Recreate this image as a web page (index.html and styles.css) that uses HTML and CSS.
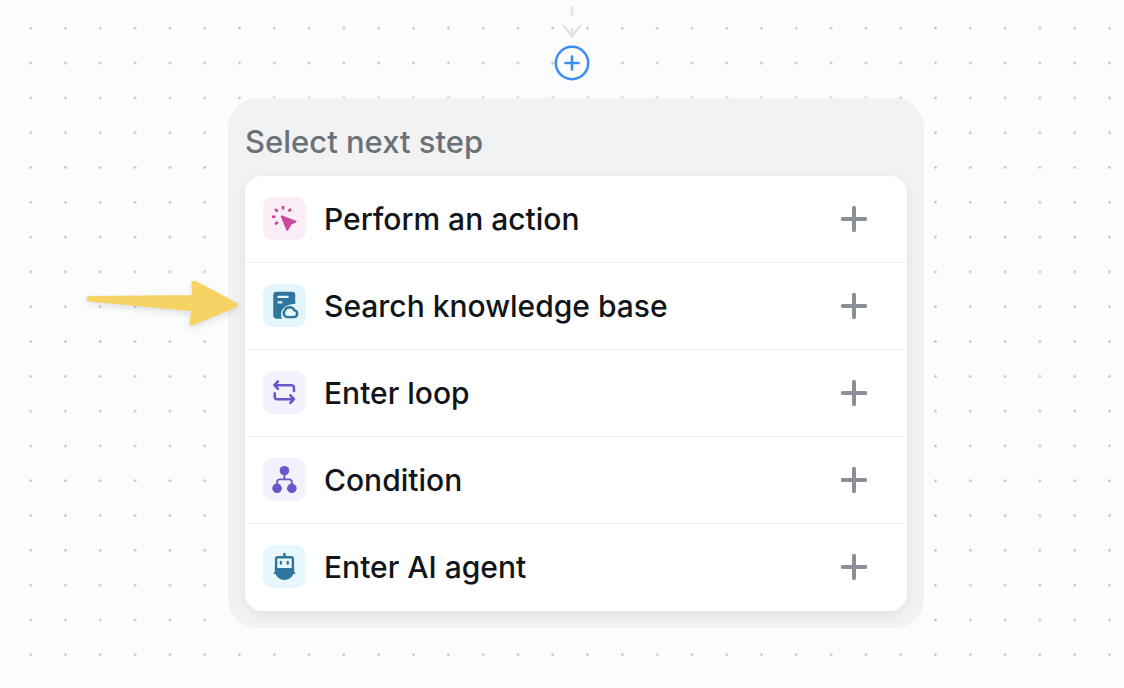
FILE: index.html
```html
<!DOCTYPE html>
<html lang="en">
<head>
<meta charset="utf-8">
<meta name="viewport" content="width=device-width, initial-scale=1">
<title>Select next step</title>
<link rel="stylesheet" href="styles.css">
</head>
<body>
<main class="canvas">
  <svg class="grid" aria-hidden="true">
    <defs>
      <pattern id="dots" x="13.3" y="10.9" width="34.8" height="34.8" patternUnits="userSpaceOnUse">
        <circle cx="17.4" cy="17.4" r="1.25" fill="#bcbec2"/>
      </pattern>
    </defs>
    <rect width="100%" height="100%" fill="url(#dots)"/>
  </svg>

  <div class="connector">
    <svg class="connector-line" viewBox="0 0 36 39" aria-hidden="true">
      <path d="M18 6V16.500M18 28V36M9 25L18 36L27 25" fill="none" stroke="#e3e4e6" stroke-width="2.600"/>
    </svg>
    <button class="add-node" type="button" aria-label="Add step">
      <svg viewBox="0 0 36 36" aria-hidden="true">
        <circle cx="18" cy="18" r="16.200" fill="#fff" stroke="#3b8cf5" stroke-width="2.500"/>
        <path d="M18 11.500V24.500M11.500 18H24.500" stroke="#3b8cf5" stroke-width="2.600" stroke-linecap="round"/>
      </svg>
    </button>
  </div>

  <section class="panel" aria-labelledby="panel-title">
    <h1 class="panel-title" id="panel-title">Select next step</h1>
    <ul class="steps">
      <li class="step">
        <button class="step-button" type="button">
          <svg class="step-icon pink" viewBox="0 0 44 44" aria-hidden="true">
            <path d="M18.300 20.200C18 19.300 18.800 18.600 19.600 18.900L33.700 24.300C34.700 24.700 34.700 25.700 33.700 26.100L29.100 28.100L25.700 33.900C25.200 34.700 24.100 34.600 23.800 33.700Z" fill="currentColor"/>
            <path d="M20.500 9.300V12.900M9.200 20.200H12.800M28.700 12.100L26.100 14.700M12.400 12.300L15 14.900M15.100 25.400L12.500 28" fill="none" stroke="currentColor" stroke-width="2.700"/>
          </svg>
          <span class="step-label">Perform an action</span>
          <svg class="plus" viewBox="0 0 28 28" aria-hidden="true"><path d="M14 2.700V25.300M2.700 14H25.300"/></svg>
        </button>
      </li>
      <li class="step">
        <svg class="pointer" viewBox="0 0 170 70" aria-hidden="true">
          <path d="M9 28.500L114.500 27.500L114 13L155.500 35L112 53L114 39L9 29Z" fill="#f7d366" stroke="#f7d366" stroke-width="5" stroke-linejoin="round"/>
        </svg>
        <button class="step-button" type="button">
          <svg class="step-icon teal" viewBox="0 0 44 44" aria-hidden="true">
            <path d="M14 8H29.500Q33 8 33 11.500V20.800C31.500 20.300 29.800 20.400 28.100 21C25.600 21.600 23.500 22.600 21.500 24.300C18.800 26.700 17.500 30.500 19.500 35.500H14Q10.500 35.500 10.500 32V11.500Q10.500 8 14 8Z" fill="currentColor"/>
            <path d="M15.800 13.300H25.200M15.800 18.800H19" stroke="#e3f6fc" stroke-width="2.300" stroke-linecap="round"/>
            <path d="M25.500 33.900H31.500A3.500 3.500 0 0 0 32.300 27A5.500 5.500 0 0 0 22.100 27.600A3.900 3.900 0 0 0 25.500 33.900Z" fill="#e3f6fc" stroke="currentColor" stroke-width="2.500"/>
          </svg>
          <span class="step-label">Search knowledge base</span>
          <svg class="plus" viewBox="0 0 28 28" aria-hidden="true"><path d="M14 2.700V25.300M2.700 14H25.300"/></svg>
        </button>
      </li>
      <li class="step">
        <button class="step-button" type="button">
          <svg class="step-icon violet" viewBox="0 0 44 44" aria-hidden="true">
            <path d="M15.300 10.700L11.700 14.500L15.300 18.300M12 14.500H29Q31.700 14.500 31.700 17.200V20.500M28 25L31.700 28.800L28 32.600M31.300 28.800H14.700Q12 28.800 12 26.100V22.800" fill="none" stroke="currentColor" stroke-width="2.600" stroke-linecap="round" stroke-linejoin="round"/>
          </svg>
          <span class="step-label">Enter loop</span>
          <svg class="plus" viewBox="0 0 28 28" aria-hidden="true"><path d="M14 2.700V25.300M2.700 14H25.300"/></svg>
        </button>
      </li>
      <li class="step">
        <button class="step-button" type="button">
          <svg class="step-icon violet" viewBox="0 0 44 44" aria-hidden="true">
            <g fill="currentColor"><circle cx="21.900" cy="13" r="4.900"/><circle cx="14.400" cy="31" r="4.900"/><circle cx="29.500" cy="31" r="4.900"/></g>
            <path d="M21.900 15V21.800M14.400 29V24.500Q14.400 21.800 17.100 21.800H26.800Q29.500 21.800 29.500 24.500V29" fill="none" stroke="currentColor" stroke-width="1.900"/>
          </svg>
          <span class="step-label">Condition</span>
          <svg class="plus" viewBox="0 0 28 28" aria-hidden="true"><path d="M14 2.700V25.300M2.700 14H25.300"/></svg>
        </button>
      </li>
      <li class="step">
        <button class="step-button" type="button">
          <svg class="step-icon aqua" viewBox="0 0 44 44" aria-hidden="true">
            <path d="M21.900 9.200V12" stroke="currentColor" stroke-width="2.600" stroke-linecap="round"/>
            <rect x="13.400" y="12.500" width="17.200" height="13" rx="1.800" fill="none" stroke="currentColor" stroke-width="2.500"/>
            <path d="M18.300 17.300V19M25.300 17.300V19" stroke="currentColor" stroke-width="2.400" stroke-linecap="round"/>
            <path d="M12.100 23.500H31.900V27L33.500 29.500L31 29.600C29.500 33.300 26.300 35.700 22 35.700C17.700 35.700 14.500 33.300 13 29.600L10.500 29.500L12.100 27Z" fill="currentColor"/>
          </svg>
          <span class="step-label">Enter AI agent</span>
          <svg class="plus" viewBox="0 0 28 28" aria-hidden="true"><path d="M14 2.700V25.300M2.700 14H25.300"/></svg>
        </button>
      </li>
    </ul>
  </section>
</main>
</body>
</html>
```
FILE: styles.css
```css
* {
  box-sizing: border-box;
}

body {
  margin: 0;
  background: #fbfcfe;
  color: #11151a;
  font-family: Inter, "Liberation Sans", sans-serif;
}

.canvas {
  position: relative;
  display: flex;
  flex-direction: column;
  min-height: 100vh;
  padding: 0 200px 60px 228px;
}

.grid {
  position: absolute;
  inset: 0;
  width: 100%;
  height: 100%;
}

.connector {
  position: relative;
  display: flex;
  flex-direction: column;
  align-items: center;
  margin: 0 9px 17px 0;
}

.connector-line {
  width: 36px;
  height: 39px;
}

.add-node {
  display: block;
  width: 36px;
  height: 36px;
  margin-top: 6px;
  padding: 0;
  border: 0;
  border-radius: 50%;
  background: none;
  cursor: pointer;
}

.add-node svg {
  display: block;
}

.panel {
  position: relative;
  padding: 24px 17px 17px;
  border-radius: 30px;
  background: #f1f2f4;
}

.panel-title {
  margin: 0 0 14px;
  color: #6c7177;
  font-size: 31px;
  font-weight: 450;
  line-height: 40px;
  font-optical-sizing: none;
}

.steps {
  margin: 0;
  padding: 0 0 1px;
  list-style: none;
  border-radius: 17px;
  background: #fff;
  box-shadow: 0 4px 14px rgba(20, 24, 32, 0.07);
}

.step {
  position: relative;
}

.step + .step {
  border-top: 1px solid #eeeef0;
}

.step-button {
  display: flex;
  align-items: center;
  gap: 18px;
  width: 100%;
  height: 86px;
  padding: 0 39px 1px 18px;
  border: 0;
  background: none;
  color: inherit;
  font: inherit;
  text-align: left;
  cursor: pointer;
}

.step-icon {
  flex: none;
  width: 43px;
  height: 43px;
  border-radius: 10px;
}

.pink {
  background: #faedf6;
  color: #c8489c;
}

.teal {
  background: #e3f6fc;
  color: #2f759e;
}

.violet {
  background: #f3f1fe;
  color: #6a56c9;
}

.aqua {
  background: #e7f7fe;
  color: #2f759e;
}

.step-label {
  flex: 1;
  font-size: 30px;
  font-weight: 500;
  line-height: 40px;
  font-optical-sizing: none;
}

.plus {
  flex: none;
  width: 28px;
  height: 28px;
  fill: none;
  stroke: #8b9096;
  stroke-width: 4;
  stroke-linecap: round;
}

.pointer {
  position: absolute;
  top: 7px;
  left: -165px;
  width: 170px;
  height: 70px;
  filter: drop-shadow(0 3px 3px rgba(20, 24, 32, 0.12));
}
```
